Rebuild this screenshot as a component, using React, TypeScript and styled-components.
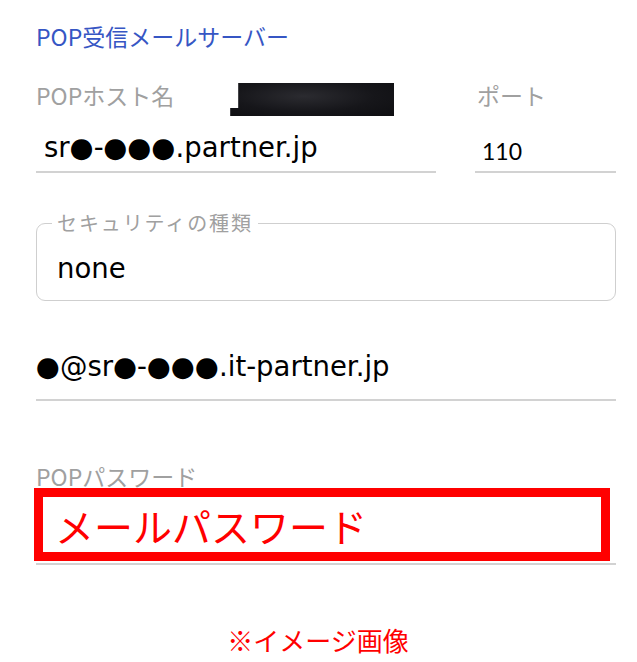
import styled, { createGlobalStyle } from "styled-components";

const GlobalStyle = createGlobalStyle`
  body {
    margin: 0;
    background: #ffffff;
    font-family: "Noto Sans CJK JP", "Noto Sans", sans-serif;
  }
`;

export const Page = styled.div`
  width: 637px;
  height: 662px;
  box-sizing: border-box;
  padding: 21px 21px 0 36px;
  display: flex;
  flex-direction: column;
`;

export const SectionTitle = styled.h2`
  margin: 0;
  font-size: 23px;
  line-height: 30px;
  font-weight: 400;
  color: #3656c4;
`;

export const Row = styled.div`
  display: flex;
  gap: 39px;
  margin-top: 29px;
`;

export const Column = styled.div<{ $width: number }>`
  width: ${(p) => p.$width}px;
  display: flex;
  flex-direction: column;
`;

export const LabelRow = styled.div`
  display: flex;
  align-items: flex-start;
  height: 30px;
`;

export const Label = styled.div<{ $indent?: number }>`
  font-size: 23px;
  line-height: 30px;
  color: #a0a0a0;
  padding-left: ${(p) => p.$indent || 0}px;
  white-space: nowrap;
`;

// 黒塗りされたホスト名の一部
export const Redacted = styled.div`
  flex: none;
  width: 164px;
  height: 33px;
  margin-left: 56px;
  margin-top: 3px;
  background: radial-gradient(ellipse at 45% 40%, #2b2b30 0%, #16161a 55%, #0e0e11 100%);
  clip-path: polygon(8px 0, 100% 0, 100% 100%, 0 100%, 0 25px, 8px 25px);
`;

export const UnderlineField = styled.div<{ $indent?: number; $top?: number; $bottom?: number }>`
  padding: ${(p) => p.$top ?? 20}px 0 ${(p) => p.$bottom ?? 7}px ${(p) => p.$indent || 0}px;
  border-bottom: 2px solid #d2d2d2;
`;

export const Value = styled.div`
  font-family: "DejaVu Sans", "Noto Sans", sans-serif;
  font-size: 27.5px;
  line-height: 34px;
  color: #000;
  white-space: nowrap;
`;

export const PortValue = styled(Value)`
  font-family: Lato, "Liberation Sans", sans-serif;
  font-size: 23px;
`;

export const SelectBox = styled.fieldset`
  margin: 38px 0 0;
  padding: 16px 20px 15px;
  border: 1.5px solid #cfcfcf;
  border-radius: 9px;
`;

export const Legend = styled.legend`
  margin-left: -5px;
  padding: 0 5px;
  font-size: 20px;
  line-height: 24px;
  letter-spacing: 1.9px;
  color: #a0a0a0;
`;

export const EmailField = styled(UnderlineField)`
  margin-top: 38px;
`;

export const PasswordLabel = styled(Label)`
  margin-top: 63px;
  line-height: 24px;
`;

export const PasswordField = styled.div`
  padding-bottom: 2px;
  border-bottom: 2px solid #d2d2d2;
`;

// 画像上の赤枠の注記
export const Highlight = styled.div`
  width: 576px;
  height: 73px;
  margin-left: -2px;
  box-sizing: border-box;
  border: 9px solid #ff0000;
  padding-left: 12px;
  display: flex;
  align-items: center;
`;

export const HighlightText = styled.span`
  font-size: 39px;
  line-height: 46px;
  color: #ff0000;
`;

export const Note = styled.div`
  margin-top: 59px;
  padding-right: 16px;
  text-align: center;
  font-size: 26px;
  line-height: 32px;
  color: #ff0000;
`;

export default function App() {
  return (
    <>
      <GlobalStyle />
      <Page>
        <SectionTitle>POP受信メールサーバー</SectionTitle>
        <Row>
          <Column $width={400}>
            <LabelRow>
              <Label>POPホスト名</Label>
              <Redacted />
            </LabelRow>
            <UnderlineField $indent={8}>
              <Value>sr●-●●●.partner.jp</Value>
            </UnderlineField>
          </Column>
          <Column $width={141}>
            <LabelRow>
              <Label $indent={2}>ポート</Label>
            </LabelRow>
            <UnderlineField $indent={7} $top={24} $bottom={3}>
              <PortValue>110</PortValue>
            </UnderlineField>
          </Column>
        </Row>
        <SelectBox>
          <Legend>セキュリティの種類</Legend>
          <Value>none</Value>
        </SelectBox>
        <EmailField $top={10} $bottom={16}>
          <Value>●@sr●-●●●.it-partner.jp</Value>
        </EmailField>
        <PasswordLabel>POPパスワード</PasswordLabel>
        <PasswordField>
          <Highlight>
            <HighlightText>メールパスワード</HighlightText>
          </Highlight>
        </PasswordField>
        <Note>※イメージ画像</Note>
      </Page>
    </>
  );
}
